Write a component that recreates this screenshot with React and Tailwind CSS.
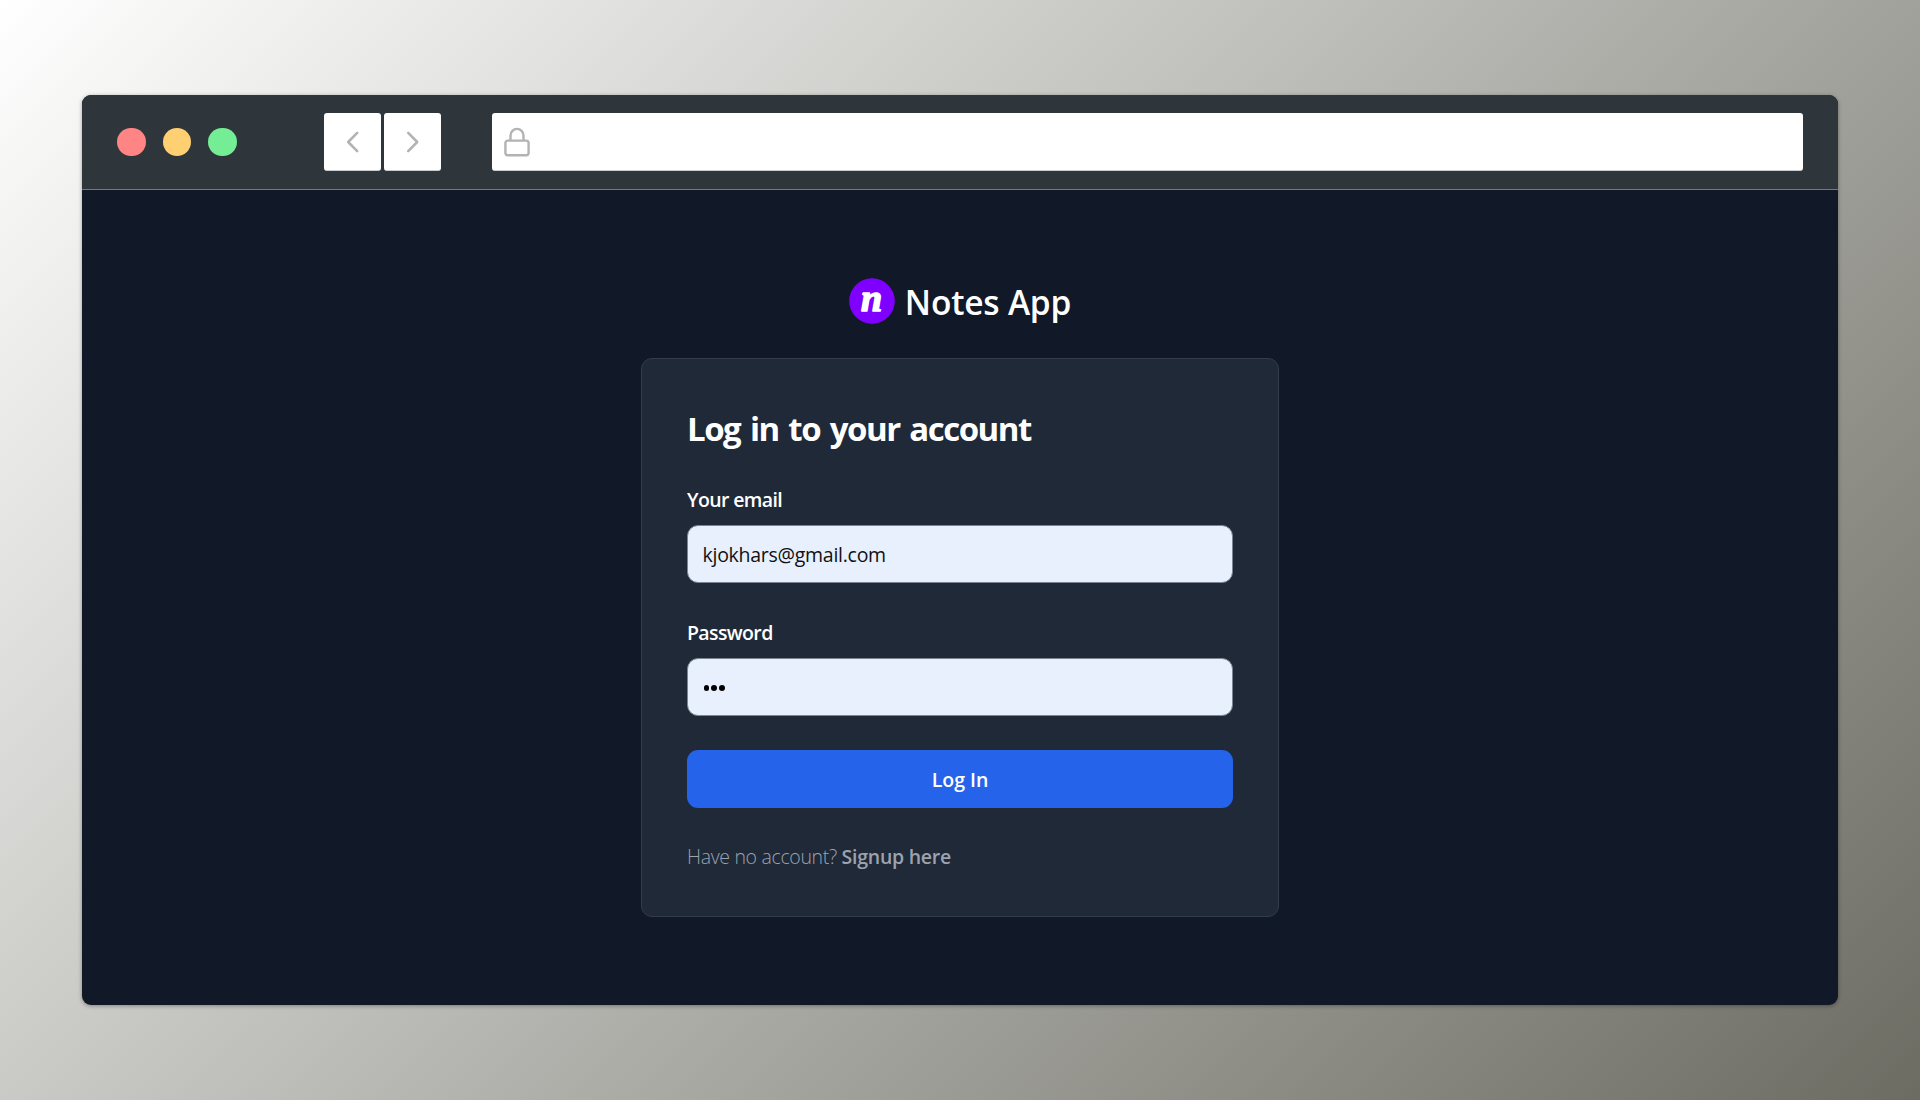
import React from 'react';

function Field({ label, children }) {
  return (
    <label className="block">
      <span className="block h-7 text-[19.5px] font-semibold leading-7 tracking-[-0.62px] text-white">{label}</span>
      <span className="mt-[11px] flex h-[58px] w-[545.5px] items-center rounded-[11px] border border-[#7b8493] bg-[#e8f0fe] pl-[14.5px] pt-px text-[19.5px] tracking-[-0.27px] text-[#111111]">
        {children}
      </span>
    </label>
  );
}

function NavButton({ d }) {
  return (
    <div className="flex h-[57.5px] w-[57px] items-center justify-center rounded-[3px] border-b border-[#c8cbcd] bg-white">
      <svg width="24" height="24" viewBox="0 0 24 24" fill="none" stroke="#b3b3b3" strokeWidth="2.6" strokeLinecap="round" strokeLinejoin="round">
        <path d={d} />
      </svg>
    </div>
  );
}

function TitleBar() {
  return (
    <div className="flex h-[95px] items-center border-b border-[#727a7e] bg-[#2e363b] pl-[35px] pr-[35px]">
      <div className="flex gap-[17px]">
        <div className="size-[28.7px] rounded-full bg-[#ff8585]" />
        <div className="size-[28.7px] rounded-full bg-[#ffd071]" />
        <div className="size-[28.7px] rounded-full bg-[#74ed94]" />
      </div>
      <div className="ml-[87px] flex gap-[3px]">
        <NavButton d="M16.2 2.9 L7.2 12 L16.2 21.1" />
        <NavButton d="M7.2 2.9 L16.2 12 L7.2 21.1" />
      </div>
      <div className="ml-[50.5px] flex h-[57.5px] grow items-center rounded-[3px] border-b border-[#c8cbcd] bg-white pl-3">
        <svg width="26" height="30" viewBox="0 0 26 30" fill="none" stroke="#b3b3b3" strokeWidth="2.4" strokeLinejoin="round">
          <rect x="1.4" y="13.6" width="23.2" height="14.6" rx="2.4" />
          <path d="M6.5 13.6 V8.4 a6.5 6.5 0 0 1 13 0 V13.6" />
        </svg>
      </div>
    </div>
  );
}

function Logo() {
  return (
    <svg width="46" height="46" viewBox="0 0 46 46" className="overflow-visible">
      <circle cx="23" cy="23" r="22.8" fill="#8000ff" />
      <text
        x="22.5"
        y="33"
        textAnchor="middle"
        fill="#ffffff"
        stroke="#ffffff"
        strokeWidth="1.5"
        strokeLinejoin="round"
        className="font-['Liberation_Serif',serif] text-[38px] font-bold italic"
      >
        n
      </text>
    </svg>
  );
}

export default function App() {
  return (
    <div className="flex h-[1100px] w-[1920px] items-start justify-center bg-[linear-gradient(135deg,#ffffff_0%,#6c6c63_100%)] pt-[95px] font-['Open_Sans',sans-serif]">
      <div className="h-[910px] w-[1756px] overflow-hidden rounded-[9px] bg-[#111827] shadow-[0_1px_4px_rgba(0,0,0,0.35)]">
        <TitleBar />
        <main className="flex flex-col items-center pt-[88px]">
          <div className="flex h-[46px] items-center gap-[10px]">
            <Logo />
            <span className="pt-[3px] text-[33.5px] font-semibold leading-[43px] tracking-[-0.2px] text-white">Notes App</span>
          </div>
          <section className="mt-[34px] h-[559px] w-[638px] rounded-[11px] border border-[#323d4b] bg-[#1f2937] pl-[45px] pt-[49px]">
            <h1 className="h-[42px] whitespace-nowrap text-[33px] font-bold leading-[42px] tracking-[-1.5px] text-white [word-spacing:2.6px]">Log in to your account</h1>
            <div className="mt-9 flex flex-col gap-9">
              <Field label="Your email">kjokhars@gmail.com</Field>
              <Field label="Password">
                <span className="ml-px flex gap-[2.6px] pt-px">
                  <i className="size-[5.4px] rounded-full bg-black" />
                  <i className="size-[5.4px] rounded-full bg-black" />
                  <i className="size-[5.4px] rounded-full bg-black" />
                </span>
              </Field>
            </div>
            <button className="mt-[34px] flex h-[57.5px] w-[546px] items-center justify-center rounded-[11px] bg-[#2563eb] pt-[2px] text-[19.5px] font-semibold text-white">Log In</button>
            <p className="mt-[35.5px] h-7 whitespace-nowrap text-[19.5px] font-light leading-7 tracking-[-0.33px] text-[#9ca3af]">
              Have no account? <span className="font-semibold tracking-[-0.27px]">Signup here</span>
            </p>
          </section>
        </main>
      </div>
    </div>
  );
}
